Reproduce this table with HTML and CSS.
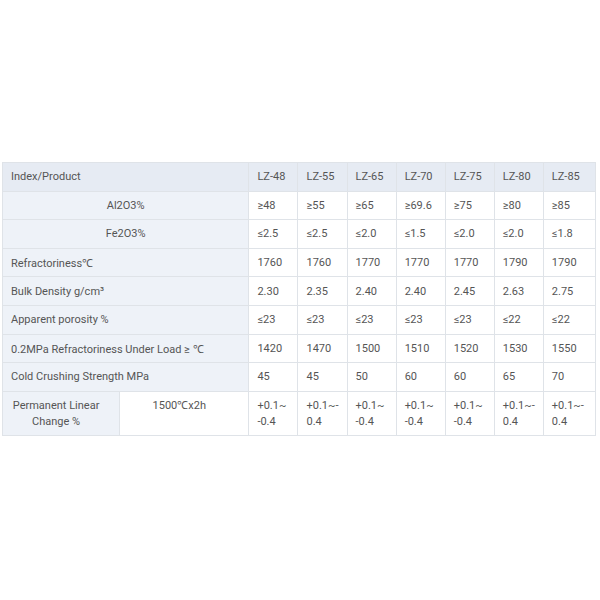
FILE: index.html
```html
<!DOCTYPE html>
<html>
<head>
<meta charset="utf-8">
<link rel="stylesheet" href="styles.css">
</head>
<body>
<div class="wrap">
<table class="spec">
<colgroup>
<col class="c-a"><col class="c-b">
<col class="c-v"><col class="c-v"><col class="c-v"><col class="c-v"><col class="c-v"><col class="c-v"><col class="c-last">
</colgroup>
<tr class="head"><td colspan="2">Index/Product</td><td>LZ-48</td><td>LZ-55</td><td>LZ-65</td><td>LZ-70</td><td>LZ-75</td><td>LZ-80</td><td>LZ-85</td></tr>
<tr><th colspan="2" class="center">Al2O3%</th><td>≥48</td><td>≥55</td><td>≥65</td><td>≥69.6</td><td>≥75</td><td>≥80</td><td>≥85</td></tr>
<tr><th colspan="2" class="center">Fe2O3%</th><td>≤2.5</td><td>≤2.5</td><td>≤2.0</td><td>≤1.5</td><td>≤2.0</td><td>≤2.0</td><td>≤1.8</td></tr>
<tr><th colspan="2">Refractoriness℃</th><td>1760</td><td>1760</td><td>1770</td><td>1770</td><td>1770</td><td>1790</td><td>1790</td></tr>
<tr><th colspan="2">Bulk Density g/cm³</th><td>2.30</td><td>2.35</td><td>2.40</td><td>2.40</td><td>2.45</td><td>2.63</td><td>2.75</td></tr>
<tr><th colspan="2">Apparent porosity %</th><td>≤23</td><td>≤23</td><td>≤23</td><td>≤23</td><td>≤23</td><td>≤22</td><td>≤22</td></tr>
<tr><th colspan="2">0.2MPa Refractoriness Under Load ≥ ℃</th><td>1420</td><td>1470</td><td>1500</td><td>1510</td><td>1520</td><td>1530</td><td>1550</td></tr>
<tr><th colspan="2">Cold Crushing Strength MPa</th><td>45</td><td>45</td><td>50</td><td>60</td><td>60</td><td>65</td><td>70</td></tr>
<tr class="tall"><th class="center shift">Permanent Linear<br>Change %</th><td class="center top shift">1500℃x2h</td><td>+0.1~<br>-0.4</td><td>+0.1~-<br>0.4</td><td>+0.1~<br>-0.4</td><td>+0.1~<br>-0.4</td><td>+0.1~<br>-0.4</td><td>+0.1~-<br>0.4</td><td>+0.1~-<br>0.4</td></tr>
</table>
</div>
</body>
</html>
```
FILE: styles.css
```css
html, body { margin: 0; padding: 0; background: #fff; }
.wrap { padding: 162px 4px 0 2px; }
.spec {
  border-collapse: collapse;
  width: 594px;
  table-layout: fixed;
  font-family: Roboto, "Liberation Sans", sans-serif;
  font-size: 11px;
  color: #555;
}
.c-a { width: 117px; }
.c-b { width: 129px; }
.c-v { width: 49px; }
.c-last { width: 52px; }
.spec td, .spec th {
  border: 1px solid #dfe3e8;
  padding: 0 8px;
  height: 27.6px;
  text-align: left;
  font-weight: normal;
  vertical-align: middle;
  white-space: nowrap;
}
.spec th { background: #eef2f8; }
.spec .head td { background: #e6ebf3; }
.spec .center { text-align: center; }
.spec .tall td, .spec .tall th { height: 37px; line-height: 16px; vertical-align: top; padding-top: 6px; }
.spec .tall .shift { padding-left: 3px; padding-right: 13px; }
.spec .tall td.top { background: #fff; }
```
